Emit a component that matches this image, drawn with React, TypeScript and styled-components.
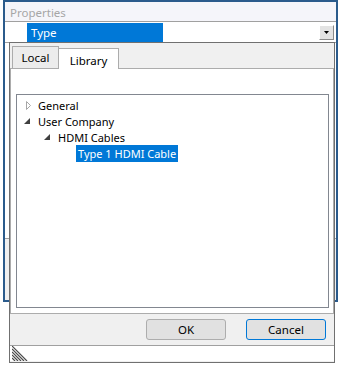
import React from 'react';
import styled, { createGlobalStyle } from 'styled-components';

const GlobalStyle = createGlobalStyle`
  body {
    margin: 0;
    background: #ffffff;
    font-family: 'Noto Sans', 'Open Sans', sans-serif;
    font-size: 11px;
  }
`;

const Screen = styled.div`
  position: relative;
  width: 342px;
  height: 366px;
  overflow: hidden;
  background: #ffffff;
`;

/* properties window behind the popup */
const PropWindow = styled.div`
  display: flex;
  flex-direction: column;
  box-sizing: border-box;
  width: 335px;
  height: 302px;
  margin-left: 3px;
  border: 2px solid #2b5b8c;
  background: #ffffff;
`;

const Header = styled.div`
  display: flex;
  align-items: flex-end;
  height: 20px;
  box-sizing: border-box;
  padding-left: 5px;
  padding-bottom: 1px;
  background: #f5f5fa;
  border-bottom: 1px solid #a0a0a0;
  color: #a6a6a6;
  font-size: 11.5px;
`;

const TypeRow = styled.div`
  display: flex;
  align-items: center;
  height: 20px;
  padding-left: 22px;
  padding-right: 2px;
  border-bottom: 1px solid #a0a0a0;
`;

const TypeCell = styled.div`
  display: flex;
  align-items: center;
  width: 136px;
  height: 19px;
  padding-left: 4px;
  box-sizing: border-box;
  background: #0078d7;
  color: #ffffff;
  font-size: 11.5px;
`;

const DropButton = styled.div`
  display: flex;
  align-items: center;
  justify-content: center;
  margin-left: auto;
  width: 15px;
  height: 15px;
  box-sizing: border-box;
  background: #e3e3e3;
  border: 1px solid;
  border-color: #ffffff #8a8a8a #8a8a8a #ffffff;
`;

const PropBody = styled.div`
  flex: 1;
`;

const DescPanel = styled.div`
  height: 61px;
  border-top: 1px solid #a0a0a0;
  background: #f0f0f0;
`;

/* popup dropdown, laid over the property grid */
const Popup = styled.div`
  position: absolute;
  left: 9px;
  top: 42px;
  width: 326px;
  height: 321px;
  box-sizing: border-box;
  display: flex;
  flex-direction: column;
  border: 1px solid #707070;
  background: #f0f0f0;
`;

const TabStrip = styled.div`
  display: flex;
  align-items: flex-start;
  height: 25px;
  padding-left: 2px;
`;

const Tab = styled.div<{ $active?: boolean }>`
  position: relative;
  display: flex;
  align-items: center;
  justify-content: center;
  box-sizing: border-box;
  margin-top: ${(p) => (p.$active ? '5px' : '3px')};
  width: ${(p) => (p.$active ? '60px' : '47px')};
  height: ${(p) => (p.$active ? '21px' : '22px')};
  border: 1px solid #acacac;
  border-bottom: none;
  border-left: ${(p) => (p.$active ? 'none' : '1px solid #acacac')};
  background: ${(p) => (p.$active ? '#ffffff' : '#ececec')};
  z-index: ${(p) => (p.$active ? 1 : 0)};
  padding-top: ${(p) => (p.$active ? '2px' : '0')};
  color: #000000;
  font-size: 11.5px;
`;

const TabPage = styled.div`
  display: flex;
  height: 246px;
  box-sizing: border-box;
  padding: 25px 4px 5px 5px;
  border: 1px solid #acacac;
  background: #ffffff;
`;

const TreeBox = styled.div`
  flex: 1;
  box-sizing: border-box;
  padding-top: 2px;
  border: 1px solid #828790;
  background: #ffffff;
`;

const TreeRow = styled.div<{ $level: number }>`
  display: flex;
  align-items: center;
  height: 16px;
  padding-left: ${(p) => 3 + p.$level * 20}px;
`;

const Expander = styled.span`
  display: flex;
  align-items: center;
  justify-content: center;
  width: 16px;
  height: 16px;
`;

const Label = styled.span<{ $selected?: boolean }>`
  display: flex;
  align-items: center;
  height: 17px;
  padding: 0 2px;
  white-space: nowrap;
  background: ${(p) => (p.$selected ? '#0078d7' : 'transparent')};
  color: ${(p) => (p.$selected ? '#ffffff' : '#000000')};
`;

const ButtonBar = styled.div`
  display: flex;
  justify-content: flex-end;
  align-items: flex-start;
  gap: 20px;
  height: 32px;
  box-sizing: border-box;
  padding: 5px 8px 0 0;
  border-bottom: 1px solid #a0a0a0;
`;

const Button = styled.div<{ $focused?: boolean }>`
  display: flex;
  align-items: center;
  justify-content: center;
  width: 80px;
  height: 21px;
  box-sizing: border-box;
  border: 1px solid ${(p) => (p.$focused ? '#0078d7' : '#adadad')};
  border-radius: 3px;
  background: #e1e1e1;
  color: #000000;
  font-size: 11.5px;
`;

const GripStrip = styled.div`
  display: flex;
  align-items: flex-end;
  height: 15px;
  padding-left: 2px;
  background: #ffffff;
`;

const Collapsed = () => (
  <svg width="5" height="9" viewBox="0 0 5 9">
    <path d="M0.5 0.5 L4.5 4.5 L0.5 8.5 Z" fill="none" stroke="#a6a6a6" />
  </svg>
);

const Expanded = () => (
  <svg width="16" height="16" viewBox="0 0 16 16">
    <path d="M10 5 L10 11 L4 11 Z" fill="#404040" />
  </svg>
);

const Grip = () => (
  <svg width="16" height="15" viewBox="0 0 16 15">
    {[0, 3, 6, 9, 12].map((k) => (
      <line key={k} x1="0" y1={k} x2={15 - k} y2="15" stroke="#4a4a4a" strokeWidth="1.2" />
    ))}
  </svg>
);

type Node = { label: string; level: number; state?: 'open' | 'closed'; selected?: boolean };

const nodes: Node[] = [
  { label: 'General', level: 0, state: 'closed' },
  { label: 'User Company', level: 0, state: 'open' },
  { label: 'HDMI Cables', level: 1, state: 'open' },
  { label: 'Type 1 HDMI Cable', level: 2, selected: true },
];

export default function App() {
  return (
    <Screen>
      <GlobalStyle />
      <PropWindow>
        <Header>Properties</Header>
        <TypeRow>
          <TypeCell>Type</TypeCell>
          <DropButton>
            <svg width="5" height="3" viewBox="0 0 5 3">
              <path d="M0 0 L5 0 L2.5 3 Z" fill="#000000" />
            </svg>
          </DropButton>
        </TypeRow>
        <PropBody />
        <DescPanel />
      </PropWindow>

      <Popup>
        <TabStrip>
          <Tab>Local</Tab>
          <Tab $active>Library</Tab>
        </TabStrip>
        <TabPage>
          <TreeBox>
            {nodes.map((n) => (
              <TreeRow key={n.label} $level={n.level}>
                <Expander>
                  {n.state === 'closed' && <Collapsed />}
                  {n.state === 'open' && <Expanded />}
                </Expander>
                <Label $selected={n.selected}>{n.label}</Label>
              </TreeRow>
            ))}
          </TreeBox>
        </TabPage>
        <ButtonBar>
          <Button>OK</Button>
          <Button $focused>Cancel</Button>
        </ButtonBar>
        <GripStrip>
          <Grip />
        </GripStrip>
      </Popup>
    </Screen>
  );
}
